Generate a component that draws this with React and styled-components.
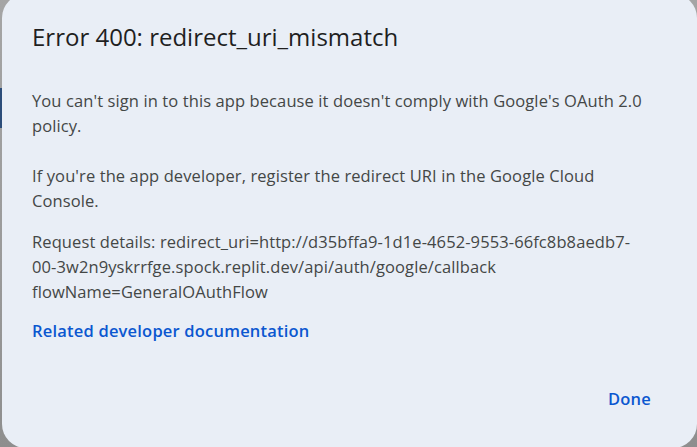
import React from 'react';
import styled, { createGlobalStyle } from 'styled-components';

const GlobalStyle = createGlobalStyle`
  html, body {
    margin: 0;
    padding: 0;
    overflow: hidden;
  }
  body {
    background: #9c9c9c;
    font-family: "Open Sans", Roboto, "Liberation Sans", Arial, sans-serif;
  }
`;

const Backdrop = styled.div`
  position: relative;
  width: 697px;
  height: 447px;
  overflow: hidden;
  background: linear-gradient(180deg, #a5a5a5 0%, #9a9a9a 60%, #8e8e8e 100%);
`;

// a sliver of the page under the scrim, peeking out on the left
const PageEdge = styled.div`
  position: absolute;
  left: 0;
  top: 88px;
  width: 3px;
  height: 40px;
  background: #2c4d7a;
`;

const Dialog = styled.section`
  position: absolute;
  left: 2px;
  top: -6px;
  width: 695px;
  height: 454px;
  box-sizing: border-box;
  padding: 27px 30px 0 30px;
  border-radius: 24px;
  background: #e9eef6;
  display: flex;
  flex-direction: column;
`;

const Title = styled.h1`
  margin: 0;
  font-size: 24px;
  line-height: 32px;
  font-weight: 400;
  color: #1f1f1f;
`;

const Body = styled.div`
  margin-top: 35px;
  padding-right: 2px;
  font-size: 16.5px;
  line-height: 25px;
  letter-spacing: 0.1px;
  color: #444746;
`;

const Para = styled.p`
  margin: 0 0 ${p => p.$gap || 16}px 0;
  overflow-wrap: break-word;
`;

const Link = styled.a`
  display: inline-block;
  font-weight: 600;
  color: #0b57d0;
  text-decoration: none;
  letter-spacing: 0.2px;
`;

const Actions = styled.div`
  margin-top: auto;
  display: flex;
  justify-content: flex-end;
  padding: 0 0 29px 0;
`;

const TextButton = styled.button`
  border: none;
  background: transparent;
  padding: 10px 16px;
  font-family: "Open Sans", Roboto, "Liberation Sans", sans-serif;
  font-size: 16.5px;
  line-height: 20px;
  font-weight: 600;
  color: #0b57d0;
  letter-spacing: 0.2px;
  cursor: pointer;
`;

export default function App() {
  return (
    <>
      <GlobalStyle />
      <Backdrop>
        <PageEdge />
        <Dialog>
          <Title>Error 400: redirect_uri_mismatch</Title>
          <Body>
            <Para $gap={25}>
              You can't sign in to this app because it doesn't comply with Google's OAuth 2.0 policy.
            </Para>
            <Para $gap={16}>
              If you're the app developer, register the redirect URI in the Google Cloud Console.
            </Para>
            <Para $gap={14}>
              Request details: redirect_uri=http://d35bffa9-1d1e-4652-9553-66fc8b8aedb7-
              <br />
              00-3w2n9yskrrfge.spock.replit.dev/api/auth/google/callback
              <br />
              flowName=GeneralOAuthFlow
            </Para>
            <Link href="#">Related developer documentation</Link>
          </Body>
          <Actions>
            <TextButton>Done</TextButton>
          </Actions>
        </Dialog>
      </Backdrop>
    </>
  );
}
